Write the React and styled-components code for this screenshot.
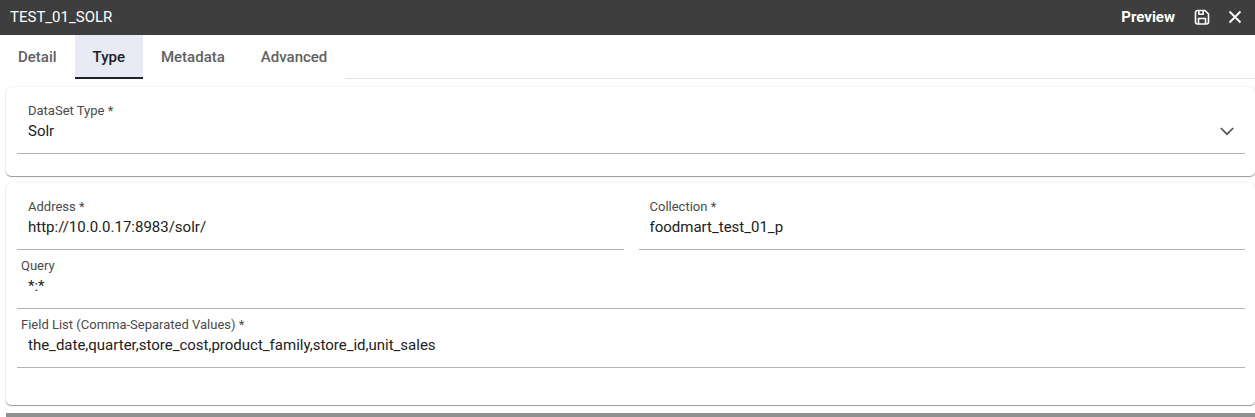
import React, { useState } from 'react';
import styled, { createGlobalStyle } from 'styled-components';

const GlobalStyle = createGlobalStyle`
  *, *::before, *::after { box-sizing: border-box; }
  body {
    margin: 0;
    background: #fff;
    color: #212121;
    font-family: Roboto, "Liberation Sans", sans-serif;
    font-size: 15px;
    overflow: hidden;
  }
  button, input, select { font: inherit; color: inherit; }
`;

const Header = styled.header`
  display: flex;
  align-items: center;
  height: 35px;
  padding: 0 10px 1px;
  background: #3e3e3e;
  color: #fff;
`;

const Title = styled.h1`
  flex: 1;
  margin: 0;
  font-size: 15px;
  line-height: 20px;
  font-weight: 400;
`;

const Actions = styled.div`
  display: flex;
  align-items: center;
  gap: 17px;
`;

const IconGroup = styled.div`
  display: flex;
  gap: 13px;
`;

const ActionButton = styled.button`
  display: flex;
  align-items: center;
  padding: 0;
  border: 0;
  background: none;
  font-weight: 700;
  line-height: 20px;
  cursor: pointer;
`;

const TabBar = styled.div`
  display: flex;
  height: 44px;
`;

const Tab = styled.button`
  padding: 2px 18px 0;
  border: 0;
  border-bottom: 2px solid ${(p) => (p.$active ? '#1f2229' : 'transparent')};
  background: ${(p) => (p.$active ? '#e8eaf6' : 'none')};
  color: ${(p) => (p.$active ? '#212121' : '#616161')};
  font-weight: 500;
  cursor: pointer;
`;

const TabRule = styled.div`
  flex: 1;
  border-bottom: 1px solid #e4e4e4;
`;

const Panels = styled.main`
  display: flex;
  flex-direction: column;
  gap: 7px;
  padding: 8px 0 0 6px;
`;

const Card = styled.section`
  padding: 8px 10px ${(p) => (p.$roomy ? '37px' : '22px')} 11px;
  border-radius: 5px;
  background: #fff;
  box-shadow: 0 1px 1px rgba(0, 0, 0, 0.38), 0 0 2px rgba(0, 0, 0, 0.14);
`;

const Columns = styled.div`
  display: grid;
  grid-template-columns: 1fr 1fr;
  gap: 15px;
`;

const FieldBox = styled.div`
  position: relative;
  display: flex;
  flex-direction: column;
  height: 59px;
  padding-top: 8px;
  border-bottom: 1px solid #b4b4b4;
`;

const Label = styled.label`
  padding-left: ${(p) => (p.$outer ? '4px' : '11px')};
  color: #4a4a4a;
  font-size: 13px;
  line-height: 16px;
`;

const Input = styled.input`
  width: 100%;
  height: 24px;
  padding: 0 11px;
  border: 0;
  outline: 0;
  background: none;
`;

const Select = styled.select`
  width: 100%;
  height: 24px;
  padding: 0 40px 0 11px;
  border: 0;
  outline: 0;
  background: none;
  appearance: none;
`;

const SelectArrow = styled.svg`
  position: absolute;
  right: 10px;
  top: 28px;
  pointer-events: none;
`;

const FooterBar = styled.div`
  height: 5px;
  margin-top: 1px;
  background: #919191;
`;

function TextField({ id, label, value, outer }) {
  return (
    <FieldBox>
      <Label htmlFor={id} $outer={outer}>{label}</Label>
      <Input id={id} type="text" defaultValue={value} />
    </FieldBox>
  );
}

const tabs = ['Detail', 'Type', 'Metadata', 'Advanced'];

export default function App() {
  const [active, setActive] = useState('Type');
  return (
    <>
      <GlobalStyle />
      <Header>
        <Title>TEST_01_SOLR</Title>
        <Actions>
          <ActionButton type="button">Preview</ActionButton>
          <IconGroup>
            <ActionButton type="button" aria-label="Save">
              <svg width="20" height="20" viewBox="0 0 20 20" fill="none" stroke="#fff" strokeWidth="1.6" strokeLinejoin="round">
                <path d="M5.500 3.500h7.500L16.500 7v8a2 2 0 0 1-2 2h-9a2 2 0 0 1-2-2V5.500a2 2 0 0 1 2-2Z" />
                <path d="M6.800 3.800v3.400h4.400V3.800M6.500 16.800v-5.300h7v5.300" />
              </svg>
            </ActionButton>
            <ActionButton type="button" aria-label="Close">
              <svg width="20" height="20" viewBox="0 0 20 20" fill="none" stroke="#fff" strokeWidth="1.8">
                <path d="M4.500 4.500l11 11M15.500 4.500l-11 11" />
              </svg>
            </ActionButton>
          </IconGroup>
        </Actions>
      </Header>
      <TabBar role="tablist">
        {tabs.map((name) => (
          <Tab
            key={name}
            type="button"
            role="tab"
            aria-selected={name === active}
            $active={name === active}
            onClick={() => setActive(name)}
          >
            {name}
          </Tab>
        ))}
        <TabRule />
      </TabBar>
      <Panels>
        <Card>
          <FieldBox>
            <Label htmlFor="dataset-type">DataSet Type *</Label>
            <Select id="dataset-type" defaultValue="Solr">
              <option>Solr</option>
            </Select>
            <SelectArrow width="16" height="16" viewBox="0 0 16 16" fill="none" stroke="#555" strokeWidth="1.7">
              <path d="M1.800 5l6.200 6.200L14.200 5" />
            </SelectArrow>
          </FieldBox>
        </Card>
        <Card $roomy>
          <Columns>
            <TextField id="address" label="Address *" value="http://10.0.0.17:8983/solr/" />
            <TextField id="collection" label="Collection *" value="foodmart_test_01_p" />
          </Columns>
          <TextField id="query" label="Query" value="*:*" outer />
          <TextField id="field-list" label="Field List (Comma-Separated Values) *" value="the_date,quarter,store_cost,product_family,store_id,unit_sales" outer />
        </Card>
        <FooterBar />
      </Panels>
    </>
  );
}
